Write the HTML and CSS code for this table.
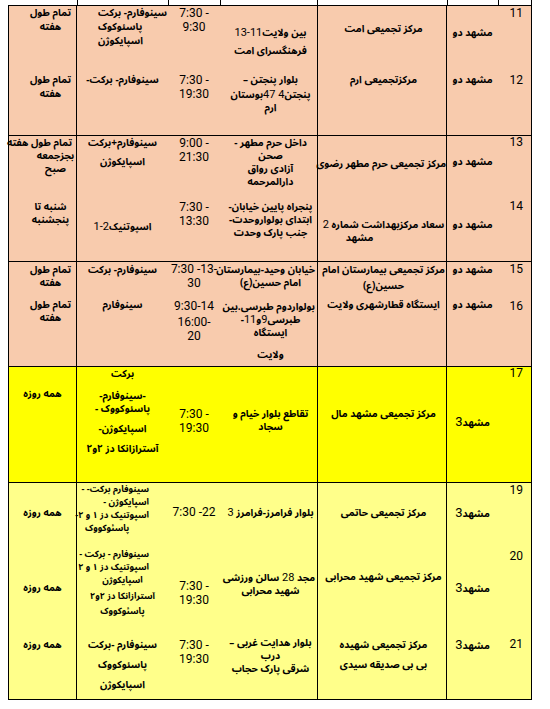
FILE: index.html
```html
<!DOCTYPE html>
<html lang="fa">
<head>
<meta charset="utf-8">
<title>مراکز تجمیعی واکسیناسیون</title>
<link rel="stylesheet" href="styles.css">
</head>
<body>
<div class="sheet">
  <div class="row stub">
    <div class="s"></div><div class="s"></div><div class="s"></div><div class="s"></div><div class="s"></div><div class="s"></div><div class="s last"></div>
  </div>

  <div class="row blk peach ga">
    <div class="num t1">11</div>
    <div class="city t20">مشهد دو</div>
    <div class="ctr t16">مرکز تجمیعی امت</div>
    <div class="addr t20"><div>بین ولایت<span class="d">11-13</span></div><div class="gap5">فرهنگسرای امت</div></div>
    <div class="time t0"><div>7:30 -</div><div>9:30</div></div>
    <div class="vac vleft lh14 t0"><div>سینوفارم- برکت</div><div>پاسئوکوک</div><div>اسپایکوژن</div></div>
    <div class="days dnarrow lh14 t0"><div>تمام طول</div><div>هفته</div></div>

    <div class="num t1">12</div>
    <div class="city t0">مشهد دو</div>
    <div class="ctr t0">مرکزتجمیعی ارم</div>
    <div class="addr t0"><div>بلوار پنجتن –</div><div class="gap2">پنجتن<span class="d">4 47</span>بوستان</div><div>ارم</div></div>
    <div class="time t0"><div>7:30 -</div><div>19:30</div></div>
    <div class="vac t0">سینوفارم- برکت-</div>
    <div class="days dnarrow lh14 t0"><div>تمام طول</div><div>هفته</div></div>
  </div>

  <div class="row blk peach gb">
    <div class="num t0">13</div>
    <div class="city t19">مشهد دو</div>
    <div class="ctr t21">مرکز تجمیعی حرم مطهر رضوی</div>
    <div class="addr t0"><div>داخل حرم مطهر -</div><div>صحن</div><div>آزادی رواق</div><div>دارالمرحمه</div></div>
    <div class="time t0"><div>9:00 -</div><div>21:30</div></div>
    <div class="vac t0"><div>سینوفارم+برکت</div><div class="gap6">اسپایکوژن</div></div>
    <div class="days t0"><div class="dright">تمام طول هفته</div><div class="dshift">بجزجمعه</div><div class="dshift">صبح</div></div>

    <div class="num t0">14</div>
    <div class="city t18">مشهد دو</div>
    <div class="ctr t18"><div>سعاد مرکزبهداشت شماره <span class="d">2</span></div><div class="ctr-off">مشهد</div></div>
    <div class="addr t0"><div>پنجراه پایین خیابان-</div><div>ابتدای بولواروحدت-</div><div>جنب پارک وحدت</div></div>
    <div class="time t0"><div>7:30 -</div><div>13:30</div></div>
    <div class="vac t20">اسپوتنیک<span class="d">2-1</span></div>
    <div class="days dnarrow t0"><div>شنبه تا</div><div>پنجشنبه</div></div>
  </div>

  <div class="row blk peach gc">
    <div class="num t1">15</div>
    <div class="city t1">مشهد دو</div>
    <div class="ctr t1"><div>مرکز تجمیعی بیمارستان امام</div><div class="gap3">حسین(ع)</div></div>
    <div class="addr t1"><div>خیابان وحید-بیمارستان</div><div>امام حسین(ع)</div></div>
    <div class="time t0"><div>7:30 -13-</div><div>30</div></div>
    <div class="vac t1">سینوفارم- برکت</div>
    <div class="days dnarrow t1"><div>تمام طول</div><div>هفته</div></div>

    <div class="num t2">16</div>
    <div class="city t0">مشهد دو</div>
    <div class="ctr t0">ایستگاه قطارشهری ولایت</div>
    <div class="addr t2"><div>بولواردوم طبرسی.بین</div><div>طبرسی<span class="d">9</span>و<span class="d">11</span>-</div><div>ایستگاه</div><div class="gap9">ولایت</div></div>
    <div class="time t1"><div>9:30-14</div><div class="gap2">16:00-</div><div>20</div></div>
    <div class="vac t0">سینوفارم</div>
    <div class="days dnarrow t0"><div>تمام طول</div><div>هفته</div></div>
  </div>

  <div class="row blk yellow gd">
    <div class="num t0">17</div>
    <div class="city t48">مشهد<span class="d big">3</span></div>
    <div class="ctr t40">مرکز تجمیعی مشهد مال</div>
    <div class="addr t40"><div>تقاطع بلوار خیام و</div><div>سجاد</div></div>
    <div class="time t40"><div>7:30 -</div><div>19:30</div></div>
    <div class="vac t0"><div>برکت</div><div class="gap9">-سینوفارم-</div><div>پاسئوکووک -</div><div class="gap7">اسپایکوژن-</div><div class="gap7">آسترازانکا دز ۲و۲</div></div>
    <div class="days t20">همه روزه</div>
  </div>

  <div class="row blk pale ge last">
    <div class="num t1">19</div>
    <div class="city t23">مشهد<span class="d big">3</span></div>
    <div class="ctr t23">مرکز تجمیعی حاتمی</div>
    <div class="addr t23">بلوار فرامرز-فرامرز <span class="d">3</span></div>
    <div class="time t22">7:30 -22</div>
    <div class="vac vjust sm t0"><div>سینوفارم برکت- -</div><div>اسپایکوژن -</div><div>اسپوتنیک دز ۱ و ۲-</div><div class="vl">پاسئوکووک</div></div>
    <div class="days t23">همه روزه</div>

    <div class="num t2">20</div>
    <div class="city t33">مشهد<span class="d big">3</span></div>
    <div class="ctr t22">مرکز تجمیعی شهید محرابی</div>
    <div class="addr t23"><div>مجد <span class="d">28</span> سالن ورزشی</div><div>شهید محرابی</div></div>
    <div class="time t31"><div>7:30 -</div><div>19:30</div></div>
    <div class="vac sm t0"><div class="vr">سینوفارم - برکت -</div><div class="vr">اسپوتنیک دز ۱ و ۲</div><div>اسپایکوژن</div><div class="gap3">آسترازانکا دز ۲و۲</div><div class="gap2">پاسئوکووک</div></div>
    <div class="days t33">همه روزه</div>

    <div class="num t11">21</div>
    <div class="city t11">مشهد<span class="d big">3</span></div>
    <div class="ctr t11"><div>مرکز تجمیعی شهیده</div><div class="gap7">بی بی صدیقه سیدی</div></div>
    <div class="addr t9"><div>بلوار هدایت غربی –</div><div>درب</div><div>شرقی پارک حجاب</div></div>
    <div class="time t11"><div>7:30 -</div><div>19:30</div></div>
    <div class="vac t11"><div>سینوفارم -برکت</div><div class="gap7">پاسئوکووک</div><div class="gap7">اسپایکوژن</div></div>
    <div class="days t11">همه روزه</div>
  </div>
</div>
</body>
</html>
```

FILE: styles.css
```css
* { box-sizing: border-box; }

body {
  margin: 0;
  background: #fff;
  color: #000;
  font-family: "Noto Sans Arabic", sans-serif;
}

.sheet {
  margin-left: 8px;
  width: 524px;
  direction: rtl;
}

.row {
  display: grid;
  grid-template-columns: 33px 51px 130px 97px 52px 91px 68px;
  border-left: 1px solid #000;
  border-right: 1px solid #000;
}

.stub {
  height: 5px;
  border-left-color: transparent;
}
.stub .s { border-left: 1px solid #000; }
.stub .s.last { border-left: 0; }

.blk { border-top: 1px solid #000; }
.blk.last { border-bottom: 1px solid #000; }

.peach { background: #f8cbad; }
.yellow { background: #ffff00; }
.pale { background: #ffff8a; }

.ga { grid-template-rows: 67px 62px; }
.gb { grid-template-rows: 64px 61px; }
.gc { grid-template-rows: 36px 68px; }
.gd { grid-template-rows: 115px; }
.ge { grid-template-rows: 65px 79px 72px; }

.row > div {
  font-size: 10px;
  line-height: 13px;
  font-weight: bold;
  white-space: nowrap;
}
.row > div.lh14 { line-height: 14px; }
.row > div.sm { font-size: 9px; }

.d {
  font-family: Roboto, sans-serif;
  font-weight: normal;
  font-size: 11px;
}
.d.big { font-size: 13px; }

.num {
  font-family: Roboto, sans-serif;
  text-align: right;
  padding-right: 8px;
  font-weight: normal !important;
  font-size: 12px !important;
}
.city { text-align: center; }
.ctr {
  text-align: center;
  padding-left: 3px;
  border-left: 1px solid #000;
  border-right: 1px solid #000;
}
.ctr-off { padding-right: 48px; }
.addr {
  text-align: center;
  padding-left: 6px;
  padding-right: 2px;
}
.time {
  font-family: Roboto, sans-serif;
  direction: ltr;
  text-align: center;
  font-weight: normal !important;
  font-size: 12px !important;
  line-height: 14px !important;
}
.vac { text-align: center; }
.vleft { text-align: left; padding-left: 21px; }
.vjust { text-align: right; padding-right: 19px; }
.vjust .vl { text-align: left; padding-left: 8px; }
.vr { text-align: right; padding-right: 19px; }
.days {
  text-align: center;
  border-right: 1px solid #000;
}
.dnarrow { padding-left: 16px; }
.dright { text-align: right; padding-right: 4px; }
.dshift { padding-left: 26px; }

.gap2 { margin-top: 2px; }
.gap3 { margin-top: 3px; }
.gap5 { margin-top: 5px; }
.gap6 { margin-top: 6px; }
.gap7 { margin-top: 7px; }
.gap9 { margin-top: 9px; }

.t0 { padding-top: 0; }
.t1 { padding-top: 1px; }
.t2 { padding-top: 2px; }
.t9 { padding-top: 9px; }
.t11 { padding-top: 11px; }
.t16 { padding-top: 16px; }
.t18 { padding-top: 18px; }
.t19 { padding-top: 19px; }
.t20 { padding-top: 20px; }
.t21 { padding-top: 21px; }
.t22 { padding-top: 22px; }
.t23 { padding-top: 23px; }
.t31 { padding-top: 31px; }
.t33 { padding-top: 33px; }
.t40 { padding-top: 40px; }
.t48 { padding-top: 48px; }
```
